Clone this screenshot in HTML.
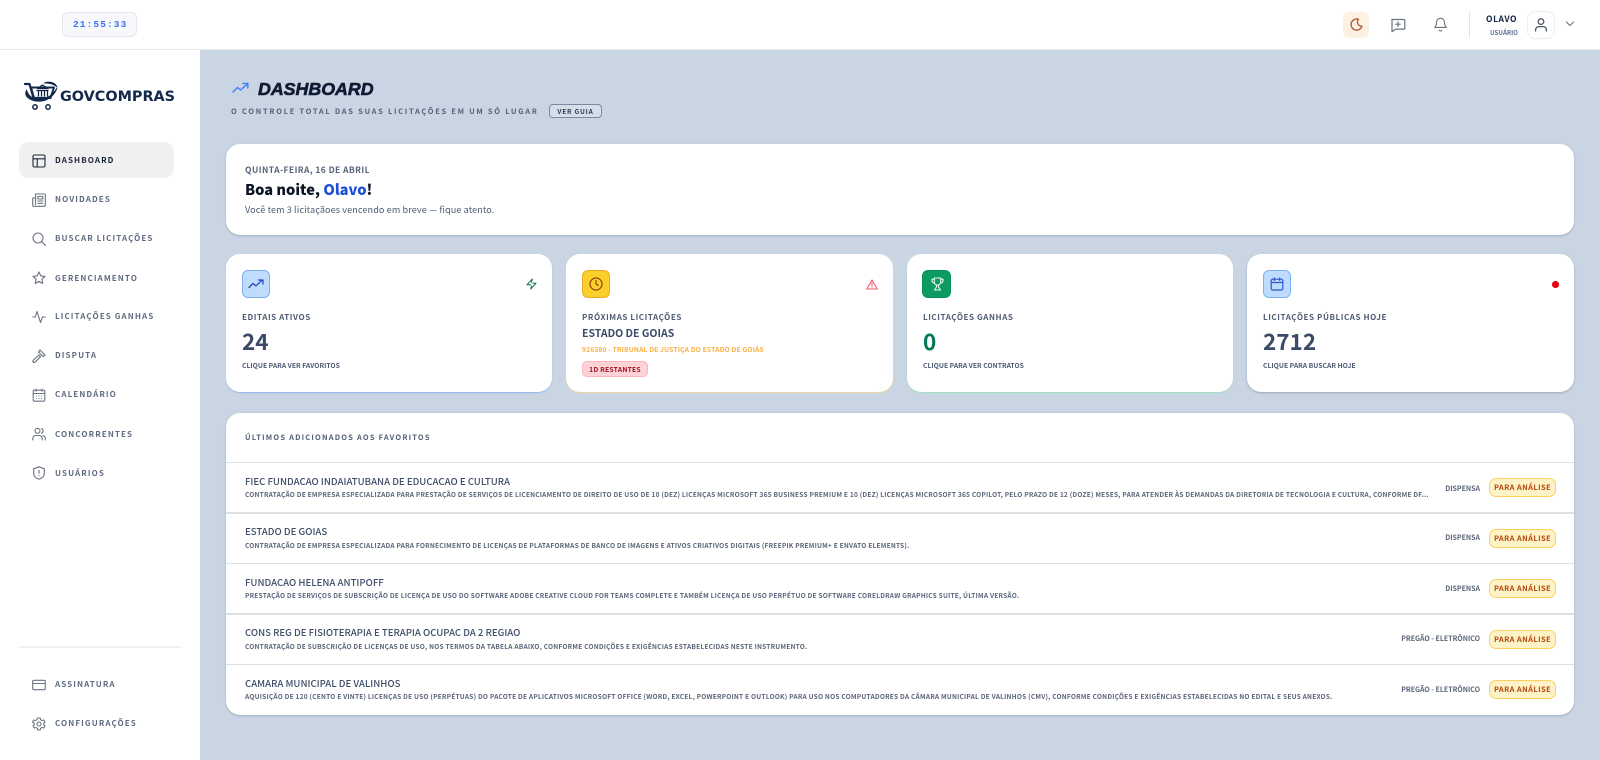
<!DOCTYPE html>
<html lang="pt-BR"><head><meta charset="utf-8"><title>GovCompras Dashboard</title>
<style>
*{box-sizing:border-box;margin:0;padding:0}
html,body{width:1600px;height:760px;overflow:hidden;background:#c9d5e2;font-family:"Noto Sans CJK JP","Liberation Sans",sans-serif}
.a{position:absolute}
.t{position:absolute;white-space:nowrap;line-height:14px;height:14px}
svg{position:absolute;fill:none;stroke-linecap:round;stroke-linejoin:round}
.nav{font-size:8px;font-weight:700;letter-spacing:1.1px;color:#5f6b80;left:55px}
.ic{stroke:#6b7280;stroke-width:1.2}
.ic *{stroke-width:1.1}
.card{position:absolute;background:#fff;border-radius:14px;box-shadow:0 1px 2px rgba(60,80,110,.3)}
.box{position:absolute;top:270px;width:28px;height:28px;border-radius:6px}
.lab{font-size:8px;font-weight:700;letter-spacing:.58px;color:#4d5b73;top:310.500px}
.val{font-size:22.500px;font-weight:700;color:#3b4a66;top:334px}
.sub{font-size:6.800px;font-weight:700;letter-spacing:0;color:#4d5b73;top:357.500px}
.sep{position:absolute;left:226px;width:1348px;height:1.500px;background:#dcdfe3}
.rt{font-size:9.600px;font-weight:500;color:#3f4d68;left:245px}
.rd{font-size:6.600px;font-weight:700;color:#5a6579;left:245px;letter-spacing:.2px}
.ty{font-size:7px;font-weight:700;color:#5a6579;right:120px}
.bd{position:absolute;left:1489px;width:67px;height:19px;border:1.500px solid #fdcf5c;border-radius:7px;background:#fef3c7;color:#b4470f;font-size:7.500px;font-weight:700;letter-spacing:.4px;line-height:17px;text-align:center}
</style></head><body>

<!-- Header -->
<div class="a" style="left:0;top:0;width:1600px;height:50px;background:#fff;border-bottom:1px solid #e8eaee"></div>
<div class="a" style="left:62px;top:12px;width:75px;height:25px;background:#f7f8fc;border:1px solid #e4e7f0;border-radius:6px"></div>
<div class="t" style="left:73px;top:18px;font:700 9.500px/14px 'Liberation Mono',monospace;letter-spacing:1.100px;color:#3b72f0">21:55:33</div>

<div class="a" style="left:1343px;top:12px;width:26px;height:26px;background:#fdf1e3;border-radius:6px"></div>
<svg style="left:1349px;top:17px;stroke:#a8562a;stroke-width:1.300" width="15" height="15" viewBox="0 0 15 15"><path d="M7 2a5.600 5.600 0 1 0 6 7.200A4.600 4.600 0 0 1 9 7.300 4.500 4.500 0 0 1 9.500 2.300 5 5 0 0 0 7 2z"/></svg>
<svg style="left:1390px;top:17px;stroke:#6b7280;stroke-width:1.200" width="16" height="16" viewBox="0 0 16 16"><path d="M2 2.500h12a.8.8 0 0 1 .8.800v8a.8.8 0 0 1-.8.800H5.500L2 14.800V3.200a.8.8 0 0 1 0-.7zM8 5v4.400M5.800 7.200h4.400"/></svg>
<svg style="left:1433px;top:17px;stroke:#6b7280;stroke-width:1.100" width="15" height="15" viewBox="0 0 15 15"><path d="M7.500 1.200a4 4 0 0 0-4 4c0 3.600-1.800 5.200-1.800 5.200h11.600s-1.800-1.600-1.800-5.200a4 4 0 0 0-4-4zM6.200 13.200a1.400 1.400 0 0 0 2.600 0"/></svg>
<div class="a" style="left:1469px;top:11px;width:1px;height:27px;background:#e3e5e9"></div>
<div class="t" style="left:1486px;top:12px;font-size:8.500px;font-weight:700;letter-spacing:.55px;color:#14233f">OLAVO</div>
<div class="t" style="left:1490px;top:26px;font-size:6.200px;font-weight:700;color:#5d7096">USUÁRIO</div>
<div class="a" style="left:1527px;top:11px;width:28px;height:28px;border:1px solid #eceef2;border-radius:8px;background:#fff"></div>
<svg style="left:1533px;top:17px;stroke:#4b5563;stroke-width:1.300" width="16" height="16" viewBox="0 0 16 16"><circle cx="8" cy="4.600" r="2.800"/><path d="M2.600 14v-1.400A3.200 3.200 0 0 1 5.800 9.600h4.400a3.200 3.200 0 0 1 3.200 3v1.400"/></svg>
<svg style="left:1565px;top:20px;stroke:#6b7280;stroke-width:1.100" width="10" height="8" viewBox="0 0 10 8"><path d="M1.500 2l3.500 3.500L8.500 2"/></svg>

<!-- Sidebar -->
<div class="a" style="left:0;top:50px;width:200px;height:710px;background:#fff"></div>
<svg style="left:24px;top:81px" width="36" height="30" viewBox="0 0 36 30">
<path d="M1 3h4.500l4 14h14.500" stroke="#13294b" stroke-width="2.200"/>
<path d="M7 6.500h23l-3.500 10.500H10z" stroke="#13294b" stroke-width="2"/>
<path d="M13.500 7.500l5-3.500 5.500 3.500zM13 9.500h11M14.500 10v5M17.500 10v5M20.500 10v5M23.500 10v5" stroke="#13294b" stroke-width="1.300"/>
<path d="M2.500 9C-1 16 8 21.500 18 20c7-1 13-6.500 15-13-3 5.500-8.500 10-15 11C11 19 5 16.500 2.500 9z" fill="#13294b" stroke="#13294b" stroke-width=".8"/>
<path d="M20 2c5-2 11-1 13 4-3-3-8-4-13-4z" fill="#13294b" stroke="#13294b" stroke-width=".8"/>
<circle cx="11" cy="26" r="2.200" stroke="#13294b" stroke-width="1.500"/><circle cx="24" cy="26" r="2.200" stroke="#13294b" stroke-width="1.500"/>
</svg>
<div class="t" style="left:60px;top:90px;font:700 14.400px/14px 'DejaVu Sans',sans-serif;color:#13294b">GOVCOMPRAS</div>

<div class="a" style="left:19px;top:142px;width:155px;height:36px;background:#f0f0f0;border-radius:10px"></div>
<svg class="ic" style="left:32px;top:154px;stroke:#1f2937" width="14" height="14" viewBox="0 0 14 14"><rect x="1" y="1" width="12" height="12" rx="1.500"/><path d="M1 4.800h12M5.200 4.800V13"/></svg>
<div class="t nav" style="top:154px;color:#1b2538">DASHBOARD</div>

<svg class="ic" style="left:32px;top:193px" width="14" height="14" viewBox="0 0 14 14"><path d="M3.500 1h9a.8.8 0 0 1 .8.800V12a1.300 1.300 0 0 1-1.300 1.300H2a1.300 1.300 0 0 1-1.300-1.300V5h2.800zM3.500 1v10.500M5.800 3.500h5v2.500h-5zM5.800 8h5M5.800 10.300h5"/></svg>
<div class="t nav" style="top:193px">NOVIDADES</div>

<svg class="ic" style="left:32px;top:232px" width="14" height="14" viewBox="0 0 14 14"><circle cx="6" cy="6" r="5"/><path d="M10 10l3.300 3.300"/></svg>
<div class="t nav" style="top:232px">BUSCAR LICITAÇÕES</div>

<svg class="ic" style="left:32px;top:271px" width="14" height="14" viewBox="0 0 14 14"><path d="M7 1l1.800 3.900 4.200.5-3.100 2.900.8 4.200L7 10.400l-3.700 2.100.8-4.200L1 5.400l4.200-.5z"/></svg>
<div class="t nav" style="top:271.500px">GERENCIAMENTO</div>

<svg class="ic" style="left:32px;top:310px" width="14" height="14" viewBox="0 0 14 14"><path d="M.8 7h2.400L5 1.500l3.500 11L10.500 7h2.700"/></svg>
<div class="t nav" style="top:310px">LICITAÇÕES GANHAS</div>

<svg class="ic" style="left:32px;top:349px" width="14" height="14" viewBox="0 0 14 14"><path d="M8 1l5 5-2 1.500L6.500 3zM6.800 6l1.700 1.700L3 13.200a1.200 1.200 0 0 1-1.800-1.800z"/></svg>
<div class="t nav" style="top:349px">DISPUTA</div>

<svg class="ic" style="left:32px;top:388px" width="14" height="14" viewBox="0 0 14 14"><rect x="1.200" y="2.200" width="11.600" height="11" rx="1.300"/><path d="M1.200 5.500h11.600M4 1v2.300M10 1v2.300M4.500 8h.1M7 8h.1M9.500 8h.1M4.500 10.500h.1M7 10.500h.1M9.500 10.500h.1"/></svg>
<div class="t nav" style="top:388px">CALENDÁRIO</div>

<svg class="ic" style="left:32px;top:427px" width="14" height="14" viewBox="0 0 14 14"><circle cx="5.500" cy="3.800" r="2.500"/><path d="M.8 13v-1.500a3 3 0 0 1 3-3h3.400a3 3 0 0 1 3 3V13M9.500 1.500a2.500 2.500 0 0 1 0 4.700M11 8.700a3 3 0 0 1 2.300 2.800V13"/></svg>
<div class="t nav" style="top:427.500px">CONCORRENTES</div>

<svg class="ic" style="left:32px;top:466px" width="14" height="14" viewBox="0 0 14 14"><path d="M7 .8l5.300 2v4.400c0 3-2.300 5-5.300 6-3-1-5.300-3-5.300-6V2.800zM7 4.300v3M7 9.700h.1"/></svg>
<div class="t nav" style="top:466.500px">USUÁRIOS</div>

<div class="a" style="left:19px;top:646px;width:162px;height:1.500px;background:#f0f1f3"></div>

<svg class="ic" style="left:32px;top:678px" width="14" height="14" viewBox="0 0 14 14"><rect x=".7" y="2.300" width="12.600" height="9.400" rx="1.300"/><path d="M.7 5.500h12.600"/></svg>
<div class="t nav" style="top:678px">ASSINATURA</div>
<svg class="ic" style="left:32px;top:717px" width="14" height="14" viewBox="0 0 14 14"><circle cx="7" cy="7" r="2"/><path d="M5.800 1h2.400l.4 1.700 1.500.8 1.700-.5 1.200 2-1.300 1.300v1.400l1.300 1.300-1.200 2-1.700-.5-1.500.8L8.200 13H5.800l-.4-1.700-1.500-.8-1.700.5-1.200-2 1.300-1.300V6.300L.5 5l1.200-2 1.700.5 1.500-.8z"/></svg>
<div class="t nav" style="top:717px">CONFIGURAÇÕES</div>

<!-- Page title -->
<svg style="left:232px;top:82px;stroke:#3b82f6;stroke-width:1.400" width="17" height="12" viewBox="0 0 17 12"><path d="M1 10l4.500-4.500 3 2.500L15.500 2M11 1.500h4.800v4.500"/></svg>
<div class="t" style="left:258px;top:82px;font:italic 700 17.800px/14px 'Liberation Sans',sans-serif;color:#0f1a33;-webkit-text-stroke:.6px #0f1a33">DASHBOARD</div>
<div class="t" style="left:231px;top:105px;font-size:7.500px;font-weight:700;letter-spacing:1.700px;color:#566378">O CONTROLE TOTAL DAS SUAS LICITAÇÕES EM UM SÓ LUGAR</div>
<div class="a" style="left:549px;top:104px;width:53px;height:14px;border:1px solid #7d8a9e;border-radius:4px;background:#d6dee8;text-align:center;font-size:6.500px;font-weight:700;letter-spacing:.8px;line-height:12px;color:#2c3850">VER GUIA</div>

<!-- Welcome -->
<div class="card" style="left:226px;top:144px;width:1348px;height:91px"></div>
<div class="t" style="left:245px;top:163px;font-size:8.500px;font-weight:700;letter-spacing:.42px;color:#566378">QUINTA-FEIRA, 16 DE ABRIL</div>
<div class="t" style="left:245px;top:182.500px;font-size:14.600px;font-weight:900;color:#0b1424">Boa noite, <span style="color:#1d4ed8">Olavo</span>!</div>
<div class="t" style="left:245px;top:202px;font-size:9.100px;color:#4d5b73;letter-spacing:.1px">Você tem 3 licitaçãoes vencendo em breve — fique atento.</div>

<!-- Stat cards -->
<div class="card" style="left:226px;top:254px;width:326px;height:138px;box-shadow:0 1px 1px #93b8ee"></div>
<div class="card" style="left:566px;top:254px;width:327px;height:138px;box-shadow:0 1px 1px #f4d79a"></div>
<div class="card" style="left:907px;top:254px;width:326px;height:138px;box-shadow:0 1px 1px #9edcc0"></div>
<div class="card" style="left:1247px;top:254px;width:327px;height:138px;box-shadow:0 1px 2px rgba(60,70,90,.32)"></div>

<div class="box" style="left:242px;background:#bfdbfe;border:1px solid #7db2f8"></div>
<svg style="left:248px;top:279px;stroke:#2747b8;stroke-width:1.300" width="16" height="10" viewBox="0 0 16 10"><path d="M1 8.500l4-4 3 2.300 6-5.500M10.500 1H15v4"/></svg>
<svg style="left:526px;top:278px;stroke:#1f7a55;stroke-width:1.100" width="11" height="12" viewBox="0 0 11 12"><path d="M6.300 1L1 6.800h3.500M7 5.200h3L4.700 11M6.300 1L5.500 4.200M4.700 11l.8-3"/></svg>
<div class="t lab" style="left:242px">EDITAIS ATIVOS</div>
<div class="t val" style="left:242px">24</div>
<div class="t sub" style="left:242px">CLIQUE PARA VER FAVORITOS</div>

<div class="box" style="left:582px;background:#fcd02c;border:1px solid #f2a922"></div>
<svg style="left:589px;top:277px;stroke:#92400e;stroke-width:1.200" width="14" height="14" viewBox="0 0 14 14"><circle cx="7" cy="7" r="6"/><path d="M7 3.500V7l2.200 1.300"/></svg>
<svg style="left:866px;top:279px;stroke:#f0566a;stroke-width:1.100" width="12" height="11" viewBox="0 0 12 11"><path d="M6 1L.8 10h10.400zM6 4.200v2.800M6 8.500h.1"/></svg>
<div class="t lab" style="left:582px">PRÓXIMAS LICITAÇÕES</div>
<div class="t" style="left:582px;top:327px;font-size:10.500px;font-weight:700;color:#3b4a66">ESTADO DE GOIAS</div>
<div class="t" style="left:582px;top:341.500px;font-size:6.800px;font-weight:700;letter-spacing:.1px;color:#fdb043">926380 - TRIBUNAL DE JUSTIÇA DO ESTADO DE GOIÁS</div>
<div class="a" style="left:582px;top:361px;width:66px;height:16px;background:#fed3d7;border:1px solid #fdb3b9;border-radius:5px;text-align:center;font-size:6.800px;font-weight:700;letter-spacing:.2px;line-height:14px;color:#a11220">1D RESTANTES</div>

<div class="box" style="left:922px;width:29px;background:#0c9c63;border:1px solid #0a8f5a"></div>
<svg style="left:931px;top:277px;stroke:#e7f8ef;stroke-width:1.100" width="13" height="14" viewBox="0 0 13 14"><path d="M3.300 1h6.400v4a3.200 3.200 0 0 1-6.400 0zM3.300 2.200H1v1.300A2.300 2.300 0 0 0 3.500 6M9.700 2.200H12v1.300A2.300 2.300 0 0 1 9.500 6M5.500 8v2L3.500 13h6l-2-3V8"/></svg>
<div class="t lab" style="left:923px">LICITAÇÕES GANHAS</div>
<div class="t val" style="left:923px;color:#04785a">0</div>
<div class="t sub" style="left:923px">CLIQUE PARA VER CONTRATOS</div>

<div class="box" style="left:1263px;background:#bfdbfe;border:1px solid #7db2f8"></div>
<svg style="left:1270px;top:277px;stroke:#2f55c8;stroke-width:1.200" width="14" height="14" viewBox="0 0 14 14"><rect x="1.200" y="2.200" width="11.600" height="10.800" rx="1.500"/><path d="M1.200 5.500h11.600M4.300 1v2.500M9.700 1v2.500"/></svg>
<div class="a" style="left:1552px;top:281px;width:6.500px;height:6.500px;border-radius:50%;background:#e8000f"></div>
<div class="t lab" style="left:1263px">LICITAÇÕES PÚBLICAS HOJE</div>
<div class="t val" style="left:1263px">2712</div>
<div class="t sub" style="left:1263px">CLIQUE PARA BUSCAR HOJE</div>

<!-- Table -->
<div class="card" style="left:226px;top:413px;width:1348px;height:302px"></div>
<div class="t" style="left:245px;top:430.500px;font-size:7.500px;font-weight:700;letter-spacing:1.180px;color:#566378">ÚLTIMOS ADICIONADOS AOS FAVORITOS</div>
<div class="sep" style="top:461.500px"></div>
<div class="sep" style="top:512px"></div>
<div class="sep" style="top:562.500px"></div>
<div class="sep" style="top:613px"></div>
<div class="sep" style="top:663.500px"></div>

<div class="t rt" style="top:474px">FIEC FUNDACAO INDAIATUBANA DE EDUCACAO E CULTURA</div>
<div class="t rd" style="top:487px">CONTRATAÇÃO DE EMPRESA ESPECIALIZADA PARA PRESTAÇÃO DE SERVIÇOS DE LICENCIAMENTO DE DIREITO DE USO DE 10 (DEZ) LICENÇAS MICROSOFT 365 BUSINESS PREMIUM E 10 (DEZ) LICENÇAS MICROSOFT 365 COPILOT, PELO PRAZO DE 12 (DOZE) MESES, PARA ATENDER ÀS DEMANDAS DA DIRETORIA DE TECNOLOGIA E CULTURA, CONFORME DF...</div>
<div class="t ty" style="top:481.500px">DISPENSA</div>
<div class="bd" style="top:478px">PARA ANÁLISE</div>

<div class="t rt" style="top:524px">ESTADO DE GOIAS</div>
<div class="t rd" style="top:537.500px">CONTRATAÇÃO DE EMPRESA ESPECIALIZADA PARA FORNECIMENTO DE LICENÇAS DE PLATAFORMAS DE BANCO DE IMAGENS E ATIVOS CRIATIVOS DIGITAIS (FREEPIK PREMIUM+ E ENVATO ELEMENTS).</div>
<div class="t ty" style="top:531px">DISPENSA</div>
<div class="bd" style="top:529px">PARA ANÁLISE</div>

<div class="t rt" style="top:575px">FUNDACAO HELENA ANTIPOFF</div>
<div class="t rd" style="top:588px">PRESTAÇÃO DE SERVIÇOS DE SUBSCRIÇÃO DE LICENÇA DE USO DO SOFTWARE ADOBE CREATIVE CLOUD FOR TEAMS COMPLETE E TAMBÉM LICENÇA DE USO PERPÉTUO DE SOFTWARE CORELDRAW GRAPHICS SUITE, ÚLTIMA VERSÃO.</div>
<div class="t ty" style="top:582px">DISPENSA</div>
<div class="bd" style="top:579px">PARA ANÁLISE</div>

<div class="t rt" style="top:625px">CONS REG DE FISIOTERAPIA E TERAPIA OCUPAC DA 2 REGIAO</div>
<div class="t rd" style="top:638.500px">CONTRATAÇÃO DE SUBSCRIÇÃO DE LICENÇAS DE USO, NOS TERMOS DA TABELA ABAIXO, CONFORME CONDIÇÕES E EXIGÊNCIAS ESTABELECIDAS NESTE INSTRUMENTO.</div>
<div class="t ty" style="top:632px">PREGÃO - ELETRÔNICO</div>
<div class="bd" style="top:630px">PARA ANÁLISE</div>

<div class="t rt" style="top:676px">CAMARA MUNICIPAL DE VALINHOS</div>
<div class="t rd" style="top:688.500px">AQUISIÇÃO DE 120 (CENTO E VINTE) LICENÇAS DE USO (PERPÉTUAS) DO PACOTE DE APLICATIVOS MICROSOFT OFFICE (WORD, EXCEL, POWERPOINT E OUTLOOK) PARA USO NOS COMPUTADORES DA CÂMARA MUNICIPAL DE VALINHOS (CMV), CONFORME CONDIÇÕES E EXIGÊNCIAS ESTABELECIDAS NO EDITAL E SEUS ANEXOS.</div>
<div class="t ty" style="top:682.500px">PREGÃO - ELETRÔNICO</div>
<div class="bd" style="top:680px">PARA ANÁLISE</div>

</body></html>
